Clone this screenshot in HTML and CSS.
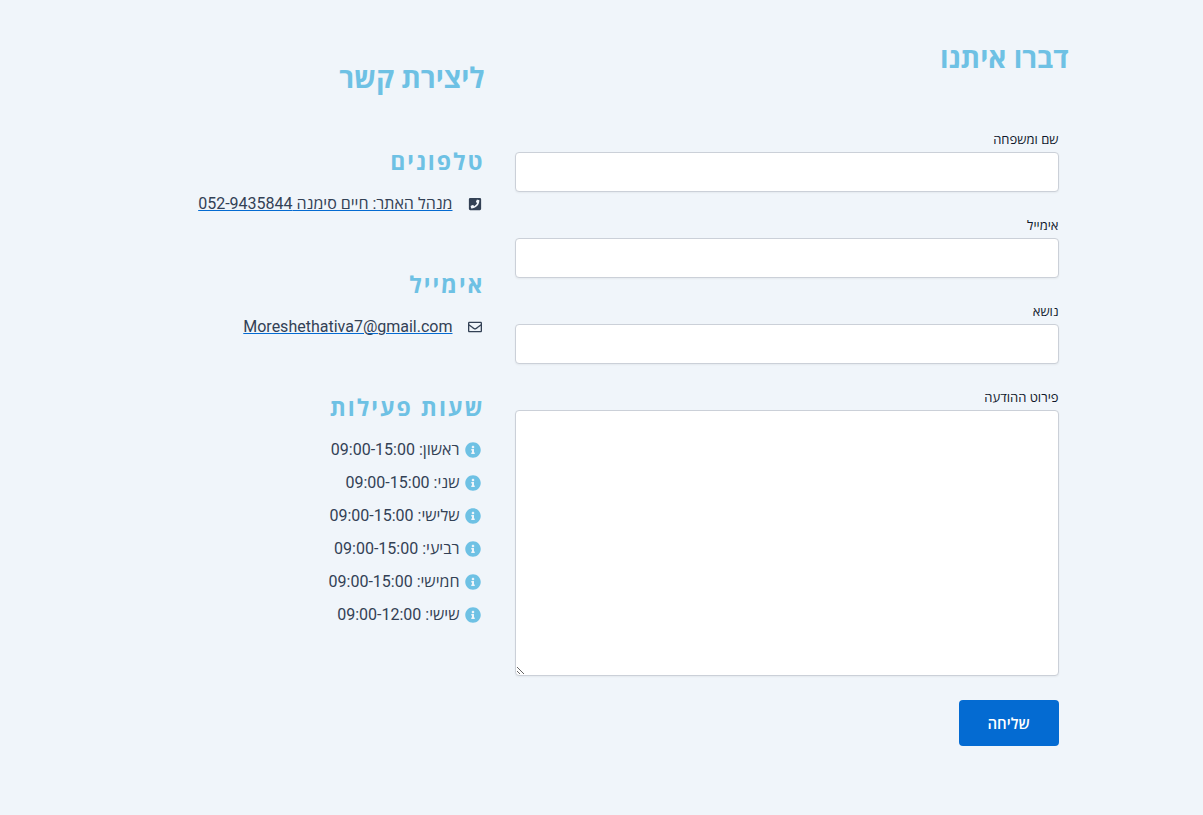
FILE: index.html
```
<!DOCTYPE html>
<html lang="he" dir="rtl">
  <head>
    <meta charset="UTF-8" />
    <meta name="viewport" content="width=device-width, initial-scale=1.0" />
    <title>צור קשר</title>
    <link rel="stylesheet" href="styles.css">
  </head>

  <body>
    <svg class="icon-defs" aria-hidden="true">
      <symbol id="icon-info" viewBox="0 0 512 512">
        <path d="M256 8C119.043 8 8 119.083 8 256c0 136.997 111.043 248 248 248s248-111.003 248-248C504 119.083 392.957 8 256 8zm0 110c23.196 0 42 18.804 42 42s-18.804 42-42 42-42-18.804-42-42 18.804-42 42-42zm56 254c0 6.627-5.373 12-12 12h-88c-6.627 0-12-5.373-12-12v-24c0-6.627 5.373-12 12-12h12v-64h-12c-6.627 0-12-5.373-12-12v-24c0-6.627 5.373-12 12-12h64c6.627 0 12 5.373 12 12v100h12c6.627 0 12 5.373 12 12v24z" />
      </symbol>
    </svg>

    <main class="contact">
      <section class="form-side">
        <h2 class="title">דברו איתנו</h2>
        <form class="contact-form">
          <div class="field">
            <label for="name">שם ומשפחה</label>
            <input type="text" id="name" name="name" />
          </div>
          <div class="field">
            <label for="email">אימייל</label>
            <input type="email" id="email" name="email" />
          </div>
          <div class="field">
            <label for="subject">נושא</label>
            <input type="text" id="subject" name="subject" />
          </div>
          <div class="field">
            <label for="message">פירוט ההודעה</label>
            <textarea id="message" name="message"></textarea>
          </div>
          <button type="submit" class="send">שליחה</button>
        </form>
      </section>

      <section class="info-side">
        <h2 class="title">ליצירת קשר</h2>

        <div class="info-block">
          <h3>טלפונים</h3>
          <ul class="links">
            <li>
              <svg class="icon" viewBox="0 0 448 512" aria-hidden="true">
                <path d="M400 32H48A48 48 0 0 0 0 80v352a48 48 0 0 0 48 48h352a48 48 0 0 0 48-48V80a48 48 0 0 0-48-48zM94 416c-7.033 0-13.057-4.873-14.616-11.627l-14.998-65a15 15 0 0 1 8.707-17.16l69.998-29.999a15 15 0 0 1 17.518 4.289l30.997 37.885c48.944-22.963 88.297-62.858 110.781-110.78l-37.886-30.997a15.001 15.001 0 0 1-4.289-17.518l30-69.998a15 15 0 0 1 17.16-8.707l65 14.998A14.997 14.997 0 0 1 384 126c0 160.292-129.945 290-290 290z" />
              </svg>
              <a href="tel:052-9435844">מנהל האתר: חיים סימנה 052-9435844</a>
            </li>
          </ul>
        </div>

        <div class="info-block">
          <h3>אימייל</h3>
          <ul class="links">
            <li>
              <svg class="icon" viewBox="0 0 512 512" aria-hidden="true">
                <path d="M464 64H48C21.490 64 0 85.490 0 112v288c0 26.510 21.490 48 48 48h416c26.510 0 48-21.490 48-48V112c0-26.510-21.490-48-48-48zm0 48v40.805c-22.422 18.259-58.168 46.651-134.587 106.490-16.841 13.247-50.201 45.072-73.413 44.701-23.208.375-56.579-31.459-73.413-44.701C106.180 199.465 70.425 171.067 48 152.805V112h416zM48 400V214.398c22.914 18.251 55.409 43.862 104.938 82.646 21.857 17.205 60.134 55.186 103.062 54.955 42.717.231 80.509-37.199 103.053-54.947 49.528-38.783 82.032-64.401 104.947-82.653V400H48z" />
              </svg>
              <a href="mailto:Moreshethativa7@gmail.com">Moreshethativa7@gmail.com</a>
            </li>
          </ul>
        </div>

        <div class="info-block">
          <h3>שעות פעילות</h3>
          <ul class="hours">
            <li><svg class="icon"><use href="#icon-info" /></svg><span>ראשון: 09:00-15:00</span></li>
            <li><svg class="icon"><use href="#icon-info" /></svg><span>שני: 09:00-15:00</span></li>
            <li><svg class="icon"><use href="#icon-info" /></svg><span>שלישי: 09:00-15:00</span></li>
            <li><svg class="icon"><use href="#icon-info" /></svg><span>רביעי: 09:00-15:00</span></li>
            <li><svg class="icon"><use href="#icon-info" /></svg><span>חמישי: 09:00-15:00</span></li>
            <li><svg class="icon"><use href="#icon-info" /></svg><span>שישי: 09:00-12:00</span></li>
          </ul>
        </div>
      </section>
    </main>
  </body>
</html>
```

FILE: styles.css
```
* {
  box-sizing: border-box;
}

body {
  margin: 0;
  background-color: #f0f5fa;
  color: #334155;
  font-family: Roboto, "Open Sans", "Liberation Sans", sans-serif;
  font-size: 16px;
}

ul {
  list-style: none;
  margin: 0;
  padding: 0;
}

.icon-defs {
  display: none;
}

.contact {
  display: grid;
  grid-template-columns: 564px 1fr;
  column-gap: 20px;
  max-width: 934px;
  margin: 0 auto;
  padding-top: 40px;
}

.title {
  margin: 0;
  color: #6ec1e4;
  font-family: "Open Sans", sans-serif;
  font-size: 28px;
  font-weight: 700;
  line-height: 34px;
}

/* form */
.contact-form {
  padding: 56px 10px 0;
}

.field {
  margin-bottom: 24px;
}

.field label {
  display: block;
  margin-bottom: 4px;
  color: #0f172a;
  font-family: "Open Sans", sans-serif;
  font-size: 13px;
  font-weight: 500;
  line-height: 18px;
}

.field input,
.field textarea {
  display: block;
  width: 100%;
  height: 40px;
  padding: 8px 12px;
  border: 1px solid #cbd0d8;
  border-radius: 4px;
  background-color: #fff;
  box-shadow: 0 1px 2px rgba(0, 0, 0, 0.05);
  font: inherit;
}

.field textarea {
  height: 266px;
  resize: vertical;
}

.send {
  width: 100px;
  height: 46px;
  border: 0;
  border-radius: 4px;
  background-color: #046bd2;
  color: #fff;
  font-family: "Open Sans", sans-serif;
  font-size: 15px;
  font-weight: 600;
}

/* contact details */
.info-side {
  padding-top: 20px;
}

.info-block {
  margin-top: 53px;
}

.info-block h3 {
  margin: 0 0 16px;
  color: #6ec1e4;
  font-family: "Open Sans", sans-serif;
  font-size: 23px;
  font-weight: 700;
  line-height: 28px;
  letter-spacing: 2px;
}

.links li {
  display: flex;
  align-items: center;
  gap: 14px;
  padding-right: 2px;
  line-height: 26px;
}

.links .icon {
  width: 16px;
  height: 14px;
}

.links a {
  color: #334155;
  text-decoration-color: #046bd2;
  text-decoration-thickness: 1px;
}

.icon {
  fill: #334155;
}

.hours {
  display: grid;
  gap: 7px;
}

.hours li {
  display: flex;
  align-items: center;
  gap: 5px;
  padding-right: 4px;
  line-height: 26px;
}

.hours .icon {
  width: 16px;
  height: 16px;
  fill: #6ec1e4;
}
```
